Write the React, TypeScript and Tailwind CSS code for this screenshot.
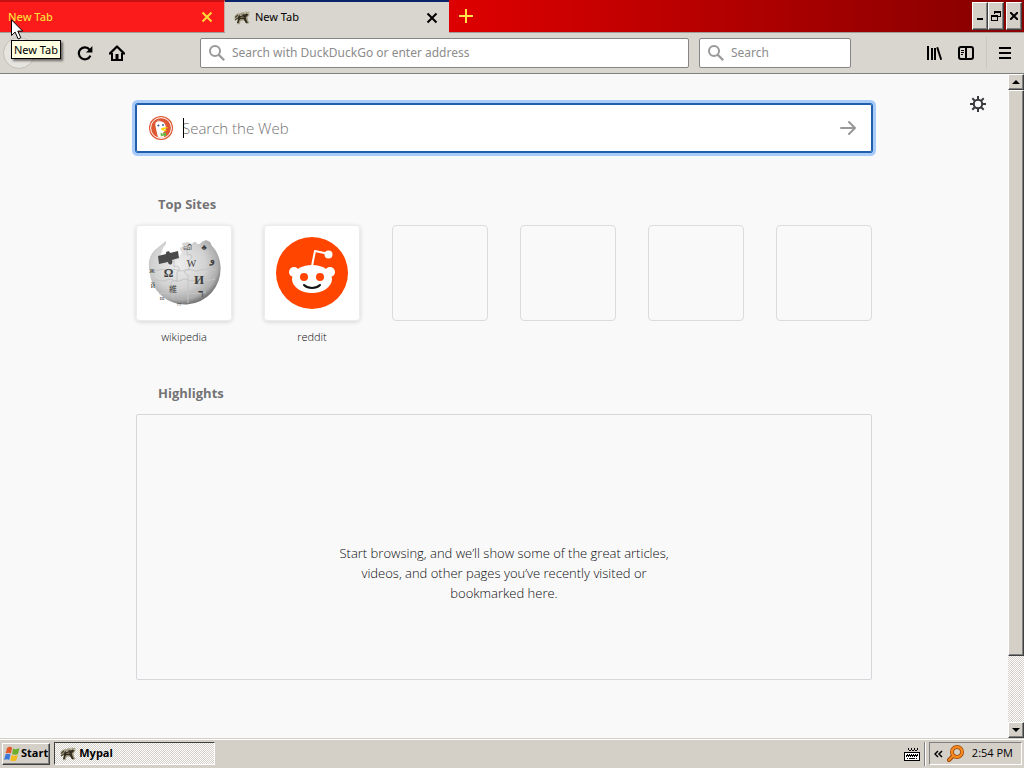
import { useState } from 'react';
import type { ReactNode } from 'react';

const raised =
  'border border-t-white border-l-white border-r-[#404040] border-b-[#404040] bg-[#d4d0c8] shadow-[inset_-1px_-1px_0_#808080]';
const dither =
  'bg-[repeating-conic-gradient(#d4d0c8_0_25%,#ffffff_0_50%)] bg-[length:2px_2px]';

const sites = [
  { name: 'wikipedia', logo: <WikipediaLogo /> },
  { name: 'reddit', logo: <RedditLogo /> },
];

function RaccoonIcon() {
  return (
    <svg className="shrink-0" width="16" height="16" viewBox="0 0 16 16">
      <path d="M.5 6.500C2 3.500 4 3 6 3.300 8 2 10 2 11 2.500L12 1l1 1.200L15 1.500l.5 2-.5 2-1.500 2 .5 3 1.500 2.500-3 1-1.500-3-2.500-.5-2 .8-1 3H2.800l1-3L3 8.500l-2 2z" fill="#a59d84" />
      <path d="M1.200 7.500L4 5M1 10l3-2" stroke="#4c4735" strokeWidth="1.200" fill="none" />
      <path d="M4 7c1.500-3 5-3.200 7-2.600l1-.9 2.500.7-1.500 2-1.300 1 .6 2.300 1.500 3.500h-2l-2-3.800-3.300-.2-1.200 1.500-.6 2.500H3l1-3.500z" fill="#302c20" />
      <path d="M10.500 2.500l2 .3-1 1zM13.500 3h1.300v.8h-1.300zM6 4.800l2.500-.4v.9L6 5.800z" fill="#eee6ce" />
      <path d="M5.500 7.500l3-1 2 .8-2.500.5z" fill="#9b8d67" />
    </svg>
  );
}

function CloseIcon() {
  return (
    <svg width="12" height="12" viewBox="0 0 12 12" fill="none" stroke="currentColor" strokeWidth="2">
      <path d="M1.5 1.5l9 9M10.5 1.5l-9 9" />
    </svg>
  );
}

function SearchIcon() {
  return (
    <svg className="shrink-0" width="16" height="16" viewBox="0 0 16 16" fill="none" stroke="#999999" strokeWidth="2">
      <circle cx="6" cy="6" r="5" />
      <path d="M9.6 9.6l5.6 5.6" strokeWidth="2.2" />
    </svg>
  );
}

function ReloadIcon() {
  return (
    <svg width="16" height="16" viewBox="0 0 16 16">
      <path d="M12.6 4.6A6 6 0 1 0 13.4 10.6" fill="none" stroke="#000" strokeWidth="2.2" />
      <path d="M15.4 1v6.4H9z" />
    </svg>
  );
}

function HomeIcon() {
  return (
    <svg width="16" height="16" viewBox="0 0 16 16">
      <path d="M.8 8.6L8 1.5l7.2 7.1" fill="none" stroke="#000" strokeWidth="2.2" strokeLinecap="round" strokeLinejoin="round" />
      <path d="M3 8v7h10V8" fill="none" stroke="#000" strokeWidth="2" />
      <path d="M6.5 15V9h3v6z" />
    </svg>
  );
}

function LibraryIcon() {
  return (
    <svg width="16" height="16" viewBox="0 0 16 16" fill="none" stroke="#000" strokeWidth="2">
      <path d="M2 1v14M6 3v12M9 3v12" />
      <path d="M11.2 2.3l4 12.4" />
    </svg>
  );
}

function SidebarIcon() {
  return (
    <svg width="16" height="16" viewBox="0 0 16 16" fill="none" stroke="#000" strokeWidth="2">
      <rect x="1" y="2" width="14" height="12" rx="2" />
      <path d="M8 2v12" />
      <path d="M3 5.5h3M3 7.5h3M3 9.5h2" strokeWidth="1" />
    </svg>
  );
}

function GearIcon() {
  return (
    <svg width="16" height="16" viewBox="0 0 16 16" fill="none" stroke="#38383d" strokeWidth="2">
      <circle cx="8" cy="8" r="4.2" />
      <path d="M8 0v4M8 12v4M0 8h4M12 8h4M2.3 2.3l2.8 2.8M10.9 10.9l2.8 2.8M2.3 13.7l2.8-2.8M10.9 5.1l2.8-2.8" />
    </svg>
  );
}

function DuckIcon() {
  return (
    <svg width="24" height="24" viewBox="0 0 24 24">
      <circle cx="12" cy="12" r="12" fill="#de5833" />
      <circle cx="12" cy="12" r="10.4" fill="none" stroke="#fff" strokeWidth="1" />
      <path d="M9 5.2c-2 .3-3 1.8-2.6 4.2.5 3 1.6 7.8 2.7 11.8 2.2.8 4.3.8 6.2.2l-1.3-4.7c2-1 3-3 2.8-5.4C16.600 7 14 4.700 9 5.200z" fill="#fff" />
      <path d="M8 4.500l3 .2-1.600 1z" fill="#d5d7d8" />
      <circle cx="9.400" cy="9.500" r="1" fill="#2d4f8e" />
      <circle cx="14" cy="9" r=".9" fill="#2d4f8e" />
      <path d="M12 12.300c2-1 4-.9 7-1.300-1 1.800-3 2.200-4.600 2.500 1 .6 2.500.5 3.600.5-1.500 1.600-5.800 1.400-6-1.700z" fill="#fdd20a" />
      <path d="M11.500 16.800l2.300 1 3-1.600.4 4-3-.8-2.300 1.200z" fill="#65bc46" />
    </svg>
  );
}

function WikipediaLogo() {
  return (
    <svg width="74" height="74" viewBox="0 0 74 74">
      <defs>
        <radialGradient id="globe" cx="42%" cy="38%" r="62%">
          <stop offset="0" stopColor="#ededed" />
          <stop offset=".6" stopColor="#d2d2d2" />
          <stop offset=".88" stopColor="#adadad" />
          <stop offset="1" stopColor="#777777" />
        </radialGradient>
      </defs>
      <path
        d="M9 13l6-5 4-3v3l-3 4-2 6-2 5 20-2 3-5c-3-2-2-6 1-5l-1-4 6-1 4 2c2-3 5-2 5 0 4 1 4-3 7-3l2-1 4 2 2 4c5 5 8 12 8.500 21a35.500 35.500 0 0 1-71 4C.5 26 3 18 9 13z"
        fill="url(#globe)"
      />
      <path d="M11 20l8-2c-1-3 4-4 4-1l8-2 1 7-7 2c2 5-4 6-4 2l-9 2z" fill="#4b4b4b" />
      <path
        d="M27 24v7c5-3 7 3 3 5v9c-5-2-8 3-4 5v12M5 45c6-3 9 2 15-1 5-3 8 4 15 0 5-3 7 3 13 0 6-2 12 2 20-1M40 12v7c5-2 7 3 2 5v10c-5-2-6 4-1 5v28M4 33c5 4 9-1 13 1 5 3 9-2 13 0 5 3 10-2 15 0 6 3 10-3 24 0M12 58c8-3 10 2 17 0 9-3 14 2 30-2"
        fill="none"
        stroke="#c4c4c4"
        strokeWidth="1"
      />
      <g fontFamily="Liberation Serif, serif" fill="#3c3c3c" textAnchor="middle">
        <text x="21.500" y="41" fontSize="12" fontWeight="bold">Ω</text>
        <text x="44.500" y="31" fontSize="10">W</text>
        <text x="52" y="48" fontSize="13" fontWeight="bold">И</text>
        <text x="26" y="56" fontSize="8" fontFamily="Noto Sans CJK JP, sans-serif">維</text>
        <text x="54" y="61" fontSize="11" fontWeight="bold">ר</text>
        <text x="65" y="27" fontSize="10" fontWeight="bold">و</text>
        <text x="40" y="14" fontSize="8">வி</text>
        <text x="57" y="14" fontSize="8">♣</text>
        <text x="5" y="37" fontSize="8">ж</text>
        <text x="6" y="52" fontSize="8">й</text>
        <text x="15" y="64" fontSize="6">ш</text>
        <text x="32" y="70" fontSize="6">ווו</text>
      </g>
    </svg>
  );
}

function RedditLogo() {
  return (
    <svg width="74" height="74" viewBox="0 0 74 74">
      <circle cx="37" cy="37" r="36" fill="#ff4500" />
      <path d="M37 30l3-15 14 3" fill="none" stroke="#fff" strokeWidth="2" strokeLinejoin="round" />
      <circle cx="53.500" cy="18.500" r="4" fill="#fff" />
      <circle cx="19" cy="36" r="5" fill="#fff" />
      <circle cx="55" cy="36" r="5" fill="#fff" />
      <ellipse cx="37" cy="43" rx="20" ry="14" fill="#fff" />
      <circle cx="29" cy="41" r="4" fill="#ff4500" />
      <circle cx="45" cy="41" r="4" fill="#ff4500" />
      <path d="M29 49c4 4 12 4 16 0" fill="none" stroke="#111" strokeWidth="2" strokeLinecap="round" />
    </svg>
  );
}

function WindowsFlag() {
  return (
    <svg width="16" height="16" viewBox="0 0 16 16">
      <path d="M3 2c2-1.600 3.500-1.400 5.200-.2L6.800 7.500c-1.500-1-3-1-5.100 0z" fill="#e2582a" />
      <path d="M9 2.500c2 1 3.500 1 6.500-.5L14 8c-2 1-3.600.9-5.900 0z" fill="#6fae2c" />
      <path d="M1.500 8.500c2-1 3.500-1 5 0L5.200 14c-1.500-1-3-1-5.100 0z" fill="#3b78d8" />
      <path d="M7.600 9c2 1 3.500 1 6.200 0L12.300 14.500c-2 1-3.800.9-6 0z" fill="#f3bb1c" />
    </svg>
  );
}

function KeyboardIcon() {
  return (
    <svg width="16" height="16" viewBox="0 0 16 16" fill="none" stroke="#000" shapeRendering="crispEdges">
      <path d="M4.500 2v2M5 4.500h2M7.500 2v2M8 4.500h2M10.500 2v2M11 4.500h2M13.500 2v2" />
      <rect x=".5" y="6.500" width="15" height="8" rx="1" fill="#fff" />
      <path d="M3 8.500h11M2 10.500h12" strokeDasharray="1 1" />
      <path d="M2 9.500h12M3 12.500h1M5 12.500h6M12 12.500h1" />
    </svg>
  );
}

function ToolButton({ label, children }: { label: string; children: ReactNode }) {
  return (
    <button aria-label={label} className="flex h-8 w-8 shrink-0 items-center justify-center">
      {children}
    </button>
  );
}

function TabBar() {
  return (
    <div className="flex h-[33px] shrink-0 border-b border-[#a09c98] bg-linear-to-r from-[#dd0000] from-45% to-[#8c0000] to-95%">
      <div className="flex w-[225px] items-center justify-between border-t-2 border-r border-t-[#c41010] border-r-[#c8a8a0] bg-[#fb1b1b] pr-[11px] pl-2 text-[#ffdb3a]">
        <button className="text-[11px] font-medium">New Tab</button>
        <button aria-label="Close tab"><CloseIcon /></button>
      </div>
      <div className="-mb-px flex w-[224px] items-center border-t-2 border-[#0a246a] bg-[#d9d6cf] pr-[11px] pl-[9px]">
        <RaccoonIcon />
        <button className="ml-[5px] flex-1 text-left text-[11px]">New Tab</button>
        <button aria-label="Close tab"><CloseIcon /></button>
      </div>
      <button aria-label="Open a new tab" className="ml-[10px] text-[#ffe14a]">
        <svg width="14" height="14" viewBox="0 0 14 14" stroke="currentColor" strokeWidth="2">
          <path d="M7 0v14M0 7h14" />
        </svg>
      </button>
      <div className="mt-[2px] ml-auto flex h-7">
        <button aria-label="Minimize" className={`flex w-4 items-center justify-center ${raised}`}>
          <svg className="mt-1" width="8" height="8" viewBox="0 0 8 8"><path d="M1 4h6v2H1z" /></svg>
        </button>
        <button aria-label="Restore" className={`flex w-4 items-center justify-center ${raised}`}>
          <svg width="10" height="10" viewBox="0 0 10 10" fill="none" stroke="#000" shapeRendering="crispEdges">
            <path d="M3.500 3V.5h6v5H7M3 1.500h7M.5 4.500h6v5h-6zM0 5.500h7" />
          </svg>
        </button>
        <button aria-label="Close" className={`mr-[2px] ml-[2px] flex w-4 items-center justify-center ${raised}`}>
          <svg width="8" height="8" viewBox="0 0 8 8" stroke="#000" strokeWidth="2"><path d="M0 0l8 8M8 0L0 8" /></svg>
        </button>
      </div>
    </div>
  );
}

function Toolbar() {
  return (
    <div className="flex h-[41px] shrink-0 items-center border-b border-[#808080] bg-[#d9d6cf] pr-[3px] pl-[3px]">
      <button aria-label="Back" className="mr-[34px] h-8 w-8 rounded-full border border-[#c4c1ba] bg-[#e6e4df]" />
      <ToolButton label="Reload"><ReloadIcon /></ToolButton>
      <ToolButton label="Home"><HomeIcon /></ToolButton>
      <label className="ml-[67px] flex h-[30px] min-w-0 flex-1 items-center gap-[7px] rounded-xs border border-[#858585] bg-white pr-2 pl-2">
        <SearchIcon />
        <input
          aria-label="Address"
          className="min-w-0 flex-1 text-[12px] outline-none placeholder:text-[#8c8c8c]"
          placeholder="Search with DuckDuckGo or enter address"
        />
      </label>
      <label className="ml-[10px] flex h-[30px] w-[152px] items-center gap-[7px] rounded-xs border border-[#858585] bg-white pr-2 pl-2">
        <SearchIcon />
        <input
          aria-label="Search"
          className="min-w-0 flex-1 text-[12px] outline-none placeholder:text-[#8c8c8c]"
          placeholder="Search"
        />
      </label>
      <div className="ml-[67px] flex">
        <ToolButton label="Library"><LibraryIcon /></ToolButton>
        <ToolButton label="Sidebars"><SidebarIcon /></ToolButton>
      </div>
      <div className="ml-1 border-l border-[#cbc8c1] pl-[2px]">
        <ToolButton label="Menu">
          <svg width="12" height="12" viewBox="0 0 12 12" stroke="#000" strokeWidth="2">
            <path d="M0 1h12M0 6h12M0 11h12" />
          </svg>
        </ToolButton>
      </div>
    </div>
  );
}

function NewTabPage() {
  const [query, setQuery] = useState('');

  return (
    <main className="relative min-w-0 flex-1 overflow-hidden bg-[#f9f9fa] font-['Open_Sans','Noto_Sans',sans-serif]">
      <button aria-label="Customize" className="absolute top-[22px] right-[22px]"><GearIcon /></button>
      <div className="mx-auto w-[736px] max-w-full pt-[30px]">
        <form
          className="flex h-12 items-center rounded-[2px] bg-white pr-4 pl-[13px] shadow-[0_0_0_1px_#1f5fae,inset_0_0_0_1px_#1f5fae,0_0_0_4px_#a9cbf8]"
          onSubmit={e => e.preventDefault()}
        >
          <DuckIcon />
          <div className="relative ml-[9px] flex flex-1">
            <span className="absolute top-[2px] left-[1px] h-5 w-px bg-black" />
            <input
              aria-label="Search the Web"
              className="flex-1 text-[15px] leading-6 font-light outline-none placeholder:text-[#737373]"
              placeholder="Search the Web"
              value={query}
              onChange={e => setQuery(e.target.value)}
            />
          </div>
          <button aria-label="Submit search">
            <svg width="16" height="16" viewBox="0 0 16 16" fill="none" stroke="#999999" strokeWidth="2" strokeLinecap="round" strokeLinejoin="round">
              <path d="M1 8h14M9 2l6 6-6 6" />
            </svg>
          </button>
        </form>

        <h2 className="mt-[42px] ml-[22px] text-[13px] leading-5 font-bold text-[#737373]">Top Sites</h2>
        <ul className="mt-[11px] grid grid-cols-6 gap-8">
          {sites.map(site => (
            <li key={site.name}>
              <a href="#" className="block text-center">
                <span className="flex h-24 items-center justify-center rounded-[4px] bg-white shadow-[inset_0_0_0_1px_#ececed,0_1px_4px_#0c0c0d28]">
                  {site.logo}
                </span>
                <span className="mt-2 block text-[11px] leading-4 font-light text-[#0c0c0d]">{site.name}</span>
              </a>
            </li>
          ))}
          {[1, 2, 3, 4].map(slot => (
            <li key={slot} className="h-24 rounded-[4px] border border-[#dcdcdd]" />
          ))}
        </ul>

        <h2 className="mt-[38px] ml-[22px] text-[13px] leading-5 font-bold text-[#737373]">Highlights</h2>
        <div className="mt-[11px] flex h-[266px] justify-center rounded-xs border border-[#d7d7db] pt-[128px]">
          <p className="w-[350px] text-center text-[13px] leading-5 font-light text-[#0c0c0d]">
            Start browsing, and we’ll show some of the great articles, videos, and other pages you’ve recently visited or
            bookmarked here.
          </p>
        </div>
      </div>
    </main>
  );
}

function Scrollbar() {
  return (
    <div className={`flex w-4 shrink-0 flex-col ${dither}`}>
      <button aria-label="Scroll up" className={`flex h-4 items-center justify-center ${raised}`}>
        <svg width="8" height="4" viewBox="0 0 8 4"><path d="M4 0l4 4H0z" /></svg>
      </button>
      <div className={`flex-17 ${raised}`} />
      <div className="flex-2" />
      <button aria-label="Scroll down" className={`flex h-4 items-center justify-center ${raised}`}>
        <svg width="8" height="4" viewBox="0 0 8 4"><path d="M0 0h8L4 4z" /></svg>
      </button>
    </div>
  );
}

function Taskbar() {
  return (
    <footer className="flex h-[30px] shrink-0 items-center border-t border-[#d4d0c8] bg-[#d4d0c8] pr-[2px] pl-[2px] font-['Open_Sans','Noto_Sans',sans-serif] shadow-[inset_0_1px_0_#ffffff]">
      <button className={`flex h-[22px] items-center gap-px pr-px pl-px text-[11px] font-bold ${raised}`}>
        <WindowsFlag />
        Start
      </button>
      <button
        className={`ml-1 flex h-[23px] w-[161px] items-center gap-[3px] border border-t-[#404040] border-r-white border-b-white border-l-[#404040] pl-[5px] text-[11px] font-bold ${dither}`}
      >
        <RaccoonIcon />
        Mypal
      </button>
      <div className="ml-auto flex items-center">
        <KeyboardIcon />
        <div className="ml-1 flex h-6 items-center border-l border-[#808080] pl-1 shadow-[inset_1px_0_0_#ffffff]">
          <div className="flex h-[23px] items-center border border-t-[#808080] border-r-white border-b-white border-l-[#808080] pr-2 pl-1 text-[11px]">
            <button aria-label="Show hidden icons">
              <svg width="9" height="8" viewBox="0 0 9 8" fill="none" stroke="#000" strokeWidth="1.500">
                <path d="M4 1L1 4l3 3M8 1L5 4l3 3" />
              </svg>
            </button>
            <svg className="mr-2 ml-1" width="17" height="17" viewBox="0 0 17 17" fill="none">
              <path d="M6.500 10.500L2 15" stroke="#9c4608" strokeWidth="4" strokeLinecap="round" />
              <circle cx="10" cy="7" r="5" stroke="#9c4608" strokeWidth="4" />
              <circle cx="10" cy="7" r="5" stroke="#f58a20" strokeWidth="2.500" />
              <path d="M6.500 10.500L2 15" stroke="#f58a20" strokeWidth="2" strokeLinecap="round" />
            </svg>
            <time>2:54 PM</time>
          </div>
        </div>
      </div>
    </footer>
  );
}

function Pointer() {
  return (
    <svg className="absolute top-[19px] left-[11px]" width="13" height="21" viewBox="0 0 13 21">
      <path d="M.5.8v15.700l3.600-3.400 3.100 6.900 2.600-1.200-3-6.700h4.900z" fill="#fff" stroke="#000" />
    </svg>
  );
}

export default function App() {
  return (
    <div className="relative flex h-screen flex-col overflow-hidden font-['Noto_Sans','Open_Sans',sans-serif] text-black">
      <TabBar />
      <Toolbar />
      <div className="flex min-h-0 flex-1">
        <NewTabPage />
        <Scrollbar />
      </div>
      <Taskbar />
      <div role="tooltip" className="absolute top-10 left-[11px] border border-black bg-[#ffffe1] px-[2px] text-[11px] leading-[17px] shadow-[2px_2px_2px_#00000080]">
        New Tab
      </div>
      <Pointer />
    </div>
  );
}
